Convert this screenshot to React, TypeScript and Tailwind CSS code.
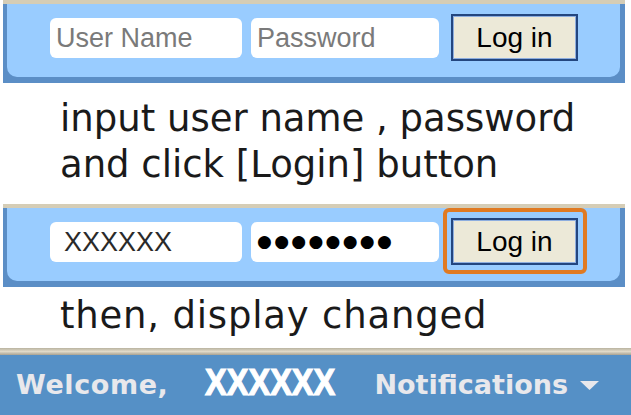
import React from "react";

const win = { fontFamily: '"Liberation Sans", Arial, sans-serif' };
const gothic = { fontFamily: '"DejaVu Sans", sans-serif' };
const bold = { fontFamily: '"DejaVu Sans", Verdana, sans-serif' };

// login strip, the light blue box with the dark frame
const LoginBar: React.FC<{ filled?: boolean }> = ({ filled }) => {
  return (
    <div className="ml-[3px] w-[622px] border-t-[4px] border-[#d5cdb6] bg-[#5b8ec6] pb-[6px] pl-[4px] pr-[5px]">
      <div className="flex h-[73px] items-start rounded-b-[10px] bg-[#99ccff] pl-[43px]">
        <div
          className="mt-[14px] flex h-[40px] w-[192px] items-center rounded-[6px] bg-white pl-[6px] text-[27px] text-[#7a7a7a]"
          style={win}
        >
          {filled ? <span className="pl-[8px] text-[#2a2a2a]">XXXXXX</span> : "User Name"}
        </div>
        <div
          className="ml-[9px] mt-[14px] flex h-[40px] w-[188px] items-center rounded-[6px] bg-white pl-[6px] text-[27px] text-[#7a7a7a]"
          style={win}
        >
          {filled ? (
            <span className="text-[17px] tracking-[2.3px] text-black" style={gothic}>
              ●●●●●●●●
            </span>
          ) : (
            "Password"
          )}
        </div>
        <div className="relative ml-[12px] mt-[10px]">
          <button
            className="flex h-[47px] w-[127px] items-center justify-center border-2 border-[#23467f] bg-[#ece9d8] text-[28px] text-black shadow-[inset_0_0_0_1px_#8eaedf]"
            style={win}
          >
            Log in
          </button>
          {filled && (
            <div className="absolute -bottom-[9px] -left-[8px] -right-[9px] -top-[10px] rounded-[6px] border-[4px] border-[#e07a22]" />
          )}
        </div>
      </div>
    </div>
  );
};

export default function App() {
  return (
    <div className="flex h-[415px] w-[631px] flex-col overflow-hidden bg-white">
      <LoginBar />
      <div className="ml-[60px] mt-[13px] text-[37px] leading-[46px] text-[#1a1a1a]" style={gothic}>
        <div>input user name , password</div>
        <div>and click [Login] button</div>
      </div>
      <div className="mt-[16px]">
        <LoginBar filled />
      </div>
      <div
        className="ml-[60px] mt-[6px] text-[37px] leading-[46px] tracking-[0.8px] text-[#1a1a1a]"
        style={gothic}
      >
        then, display changed
      </div>
      <div className="mt-auto flex h-[67px] flex-col">
        <div className="h-[7px] bg-gradient-to-b from-[#b9b3a0] via-[#e0dac8] to-[#a8a292]" />
        <div
          className="flex flex-1 items-center bg-[#5590c6] pl-[16px] text-[27px] font-bold text-[#e8e8ec]"
          style={bold}
        >
          <span className="tracking-[0.6px]">Welcome,</span>
          <span className="ml-[37px] w-[169px]">
            <span
              className="inline-block origin-left scale-x-[0.88] text-[37px] leading-[40px] text-white [-webkit-text-stroke:1.2px_white]"
              style={win}
            >
              XXXXXX
            </span>
          </span>
          <span>Notifications</span>
          <svg className="ml-[11px]" width="21" height="11" viewBox="0 0 21 11">
            <path d="M1 1 L20 1 L10.5 10 Z" fill="#e8e8ec" />
          </svg>
        </div>
      </div>
    </div>
  );
}
